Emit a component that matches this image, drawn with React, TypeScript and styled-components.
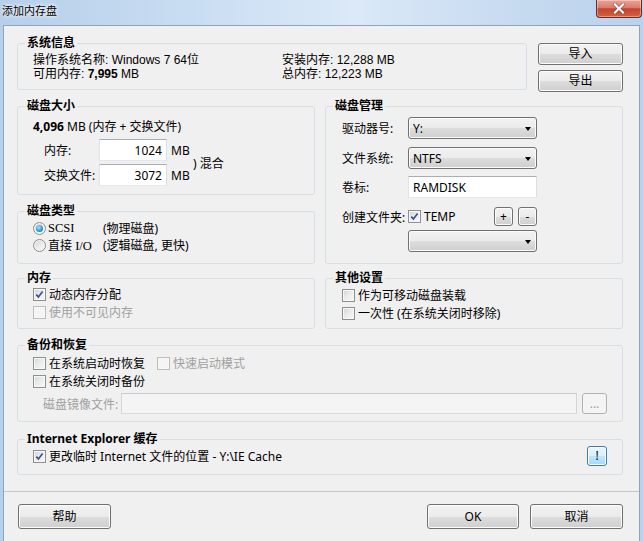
import * as React from 'react';
import styled, { createGlobalStyle } from 'styled-components';

const FONT = '"Noto Sans", "Noto Sans CJK SC", sans-serif';

const GlobalStyle = createGlobalStyle`
  * { box-sizing: border-box; }
  html, body { margin: 0; padding: 0; }
  body {
    background: #c4d9f0;
    font-family: ${FONT};
    font-size: 12px;
    color: #000;
  }
`;

const Window = styled.div`
  width: 643px;
  height: 541px;
  overflow: hidden;
  display: flex;
  flex-direction: column;
  padding: 0 3px;
  background: linear-gradient(90deg, #b7cfea 0%, #c9ddf2 30%, #dbe9f8 55%, #c8dbf0 78%, #bad2ec 100%);
`;

const TitleBar = styled.div`
  height: 25px;
  flex: none;
  display: flex;
  align-items: flex-start;
  justify-content: space-between;
  margin: 0 -3px;
  padding-left: 2px;
`;

const Title = styled.div`
  font-size: 11px;
  line-height: 22px;
  text-shadow: 0 0 5px #fff, 0 0 3px #fff;
`;

const CloseButton = styled.div`
  width: 46px;
  height: 18px;
  margin-right: 1px;
  display: flex;
  align-items: center;
  justify-content: center;
  border: 1px solid #6b2b26;
  border-top: none;
  border-radius: 0 0 4px 4px;
  background: linear-gradient(#e9a596 0%, #dc7a6c 45%, #c5412f 52%, #d0643f 100%);
  box-shadow: inset 0 0 0 1px rgba(255, 255, 255, 0.35);
`;

const Client = styled.div`
  flex: 1;
  display: flex;
  flex-direction: column;
  background: #f0f0f0;
  border: 1px solid #8fa3bd;
  border-bottom: none;
`;

const Body = styled.div`
  display: flex;
  flex-direction: column;
  padding: 10px 16px 0 13px;
`;

const TopRow = styled.div`
  display: flex;
  align-items: flex-start;
  gap: 11px;
`;

const ButtonColumn = styled.div`
  width: 85px;
  flex: none;
  display: flex;
  flex-direction: column;
  gap: 5px;
  padding-top: 7px;
`;

const Columns = styled.div`
  display: grid;
  grid-template-columns: 298px 298px;
  column-gap: 10px;
  row-gap: 7px;
  margin-top: 7px;
`;

const Stack = styled.div`
  display: flex;
  flex-direction: column;
`;

const Group = styled.fieldset<{ $mt?: number }>`
  margin: ${p => p.$mt ?? 0}px 0 0;
  padding: 0;
  min-width: 0;
  flex: 1;
  border: 1px solid #d5dfe5;
  border-radius: 3px;
`;

const Legend = styled.legend`
  margin-left: 7px;
  padding: 0 2px;
  font-weight: bold;
  font-size: 12px;
  line-height: 14px;
`;

const GroupBody = styled.div<{ $pad: string }>`
  padding: ${p => p.$pad};
`;

const InfoGrid = styled.div`
  display: grid;
  grid-template-columns: 249px auto;
  font-family: "Liberation Sans", "Noto Sans CJK SC", sans-serif;
  line-height: 14px;
  white-space: nowrap;
`;

const Line = styled.div`
  line-height: 14px;
  white-space: nowrap;
`;

const SizeGrid = styled.div`
  display: grid;
  grid-template-columns: 55px 68px 23px auto;
  grid-template-rows: 22px 22px;
  row-gap: 3px;
  margin: 5px 0 0 11px;
  align-items: center;
`;

const Unit = styled.span`
  padding-left: 4px;
`;

const Mixed = styled.span`
  grid-column: 4;
  grid-row: 1 / 3;
  padding-left: 3px;
  white-space: nowrap;
`;

const TextBox = styled.div<{ $align?: 'left' | 'right'; $disabled?: boolean }>`
  height: 100%;
  display: flex;
  align-items: center;
  justify-content: ${p => (p.$align === 'right' ? 'flex-end' : 'flex-start')};
  padding: 0 4px;
  background: ${p => (p.$disabled ? '#f4f4f4' : '#fff')};
  border: 1px solid ${p => (p.$disabled ? '#c9cccf' : '#abadb3')};
  border-bottom-color: ${p => (p.$disabled ? '#d8dbde' : '#e3e9ef')};
  border-left-color: ${p => (p.$disabled ? '#d2d5d8' : '#e2e3ea')};
  border-right-color: ${p => (p.$disabled ? '#d2d5d8' : '#dbdfe6')};
`;

const Latin = styled.span`
  font-family: "Liberation Serif", serif;
  font-size: 12.5px;
`;

const RadioRow = styled.div`
  display: grid;
  grid-template-columns: 15px 55px auto;
  align-items: center;
  height: 17px;
  white-space: nowrap;
`;

const Radio = styled.span<{ $checked?: boolean }>`
  width: 13px;
  height: 13px;
  border-radius: 50%;
  border: 1px solid #8e8f8f;
  display: flex;
  align-items: center;
  justify-content: center;
  background: linear-gradient(135deg, #d0d3d8 0%, #eeeeee 60%, #fbfbfb 100%);
  box-shadow: inset 0 0 0 1px #f6f6f6;

  &::after {
    content: '';
    display: ${p => (p.$checked ? 'block' : 'none')};
    width: 7px;
    height: 7px;
    border-radius: 50%;
    background: radial-gradient(circle at 40% 35%, #a8e4ff 0%, #3ea0dc 50%, #175c98 100%);
  }
`;

const CheckRow = styled.div<{ $h?: number; $gap?: number }>`
  display: flex;
  align-items: center;
  height: ${p => p.$h ?? 18}px;
  gap: ${p => p.$gap ?? 0}px;
  white-space: nowrap;
`;

const CheckItem = styled.label<{ $disabled?: boolean }>`
  display: inline-flex;
  align-items: center;
  gap: 3px;
  color: ${p => (p.$disabled ? '#a0a0a0' : '#000')};
`;

const Box = styled.span<{ $disabled?: boolean }>`
  width: 13px;
  height: 13px;
  flex: none;
  display: flex;
  align-items: center;
  justify-content: center;
  border: 1px solid ${p => (p.$disabled ? '#bcbcbc' : '#8e8f8f')};
  background: ${p =>
    p.$disabled
      ? '#f4f4f4'
      : 'linear-gradient(135deg, #cfd2d7 0%, #e9eaec 45%, #f8f8f8 100%)'};
  box-shadow: inset 0 0 0 1px #f7f7f7;
`;

const FormRow = styled.div<{ $mt?: number; $h?: number }>`
  display: grid;
  grid-template-columns: 66px 129px;
  align-items: center;
  height: ${p => p.$h ?? 22}px;
  margin-top: ${p => p.$mt ?? 0}px;
  white-space: nowrap;
`;

const Controls = styled.div`
  display: flex;
  align-items: center;
  height: 100%;
`;

const SmallButtons = styled.div`
  display: flex;
  gap: 5px;
  margin-left: auto;
`;

const Combo = styled.div`
  height: 100%;
  display: flex;
  align-items: center;
  justify-content: space-between;
  padding: 0 5px 0 4px;
  border: 1px solid #707070;
  border-radius: 3px;
  background: linear-gradient(#f2f2f2 0%, #ebebeb 50%, #dddddd 51%, #cfcfcf 100%);
  box-shadow: inset 0 0 0 1px #fbfbfb;
`;

const Arrow = styled.span`
  width: 0;
  height: 0;
  border-left: 3.5px solid transparent;
  border-right: 3.5px solid transparent;
  border-top: 4px solid #000;
  margin-top: 1px;
`;

const Button = styled.button<{ $w: number; $h: number; $disabled?: boolean; $hot?: boolean }>`
  width: ${p => p.$w}px;
  height: ${p => p.$h}px;
  flex: none;
  padding: 0;
  font-family: ${FONT};
  font-size: 12px;
  line-height: 1;
  color: ${p => (p.$disabled ? '#a0a0a0' : '#000')};
  border: 1px solid ${p => (p.$disabled ? '#adb2b5' : p.$hot ? '#3c7fb1' : '#707070')};
  border-radius: 3px;
  background: ${p =>
    p.$disabled
      ? '#f4f4f4'
      : p.$hot
      ? 'linear-gradient(#eaf6fd 0%, #d9f0fc 50%, #bee6fd 51%, #a7d9f5 100%)'
      : 'linear-gradient(#f2f2f2 0%, #ebebeb 50%, #dddddd 51%, #cfcfcf 100%)'};
  box-shadow: inset 0 0 0 1px ${p => (p.$disabled ? '#f4f4f4' : '#fcfcfc')};
  display: flex;
  align-items: center;
  justify-content: center;
`;

const FileRow = styled.div`
  display: flex;
  align-items: center;
  gap: 5px;
  height: 21px;
  margin-top: 3px;
`;

const FileLabel = styled.span`
  width: 83px;
  flex: none;
  padding-left: 10px;
  color: #a0a0a0;
  white-space: nowrap;
`;

const FileInput = styled(TextBox)`
  flex: 1;
`;

const IeRow = styled.div`
  display: flex;
  align-items: center;
  justify-content: space-between;
  height: 20px;
`;

const Footer = styled.div`
  display: flex;
  align-items: center;
  margin-top: 16px;
  padding: 12px 16px 0 14px;
  border-top: 1px solid #c6c6c6;
`;

const FooterRight = styled.div`
  display: flex;
  gap: 11px;
  margin-left: auto;
`;

function Check({ checked, disabled }: { checked?: boolean; disabled?: boolean }) {
  return (
    <Box $disabled={disabled}>
      {checked && (
        <svg width="9" height="9" viewBox="0 0 9 9">
          <path d="M1.3 4.6 L3.4 6.9 L7.6 1.4" fill="none" stroke="#35528c" strokeWidth="1.6" />
        </svg>
      )}
    </Box>
  );
}

function CheckOption(props: { label: React.ReactNode; checked?: boolean; disabled?: boolean }) {
  return (
    <CheckItem $disabled={props.disabled}>
      <Check checked={props.checked} disabled={props.disabled} />
      <span>{props.label}</span>
    </CheckItem>
  );
}

export default function App() {
  return (
    <>
      <GlobalStyle />
      <Window>
        <TitleBar>
          <Title>添加内存盘</Title>
          <CloseButton>
            <svg width="12" height="11" viewBox="0 0 12 11">
              <path d="M2 1.5 L10 9.5 M10 1.5 L2 9.5" stroke="#5a1a14" strokeWidth="3.4" strokeLinecap="square" opacity="0.5" />
              <path d="M2 1.5 L10 9.5 M10 1.5 L2 9.5" stroke="#fff" strokeWidth="2.2" strokeLinecap="square" />
            </svg>
          </CloseButton>
        </TitleBar>
        <Client>
          <Body>
            <TopRow>
              <Group>
                <Legend>系统信息</Legend>
                <GroupBody $pad="3px 0 8px 15px">
                  <InfoGrid>
                    <span>操作系统名称: Windows 7 64位</span>
                    <span>安装内存: 12,288 MB</span>
                    <span>可用内存: <b>7,995</b> MB</span>
                    <span>总内存: 12,223 MB</span>
                  </InfoGrid>
                </GroupBody>
              </Group>
              <ButtonColumn>
                <Button $w={85} $h={22}>导入</Button>
                <Button $w={85} $h={22}>导出</Button>
              </ButtonColumn>
            </TopRow>

            <Columns>
              <Stack>
                <Group>
                  <Legend>磁盘大小</Legend>
                  <GroupBody $pad="7px 0 8px 15px">
                    <Line><b>4,096</b> MB (内存 + 交换文件)</Line>
                    <SizeGrid>
                      <span>内存:</span>
                      <TextBox $align="right">1024</TextBox>
                      <Unit>MB</Unit>
                      <Mixed>) 混合</Mixed>
                      <span>交换文件:</span>
                      <TextBox $align="right">3072</TextBox>
                      <Unit>MB</Unit>
                    </SizeGrid>
                  </GroupBody>
                </Group>
                <Group $mt={9}>
                  <Legend>磁盘类型</Legend>
                  <GroupBody $pad="1px 0 5px 15px">
                    <RadioRow>
                      <Radio $checked />
                      <Latin>SCSI</Latin>
                      <span>(物理磁盘)</span>
                    </RadioRow>
                    <RadioRow>
                      <Radio />
                      <span>直接 <Latin>I/O</Latin></span>
                      <span>(逻辑磁盘, 更快)</span>
                    </RadioRow>
                  </GroupBody>
                </Group>
              </Stack>

              <Stack>
                <Group>
                  <Legend>磁盘管理</Legend>
                  <GroupBody $pad="4px 0 11px 16px">
                    <FormRow>
                      <span>驱动器号:</span>
                      <Combo>Y:<Arrow /></Combo>
                    </FormRow>
                    <FormRow $mt={8}>
                      <span>文件系统:</span>
                      <Combo>NTFS<Arrow /></Combo>
                    </FormRow>
                    <FormRow $mt={7}>
                      <span>卷标:</span>
                      <TextBox>RAMDISK</TextBox>
                    </FormRow>
                    <FormRow $mt={9} $h={19}>
                      <span>创建文件夹:</span>
                      <Controls>
                        <CheckOption label="TEMP" checked />
                        <SmallButtons>
                          <Button $w={19} $h={19}>+</Button>
                          <Button $w={19} $h={19}>-</Button>
                        </SmallButtons>
                      </Controls>
                    </FormRow>
                    <FormRow $mt={4}>
                      <span />
                      <Combo>&nbsp;<Arrow /></Combo>
                    </FormRow>
                  </GroupBody>
                </Group>
              </Stack>

              <Group>
                <Legend>内存</Legend>
                <GroupBody $pad="0 0 7px 15px">
                  <CheckRow>
                    <CheckOption label="动态内存分配" checked />
                  </CheckRow>
                  <CheckRow>
                    <CheckOption label="使用不可见内存" disabled />
                  </CheckRow>
                </GroupBody>
              </Group>

              <Group>
                <Legend>其他设置</Legend>
                <GroupBody $pad="1px 0 6px 16px">
                  <CheckRow>
                    <CheckOption label="作为可移动磁盘装载" />
                  </CheckRow>
                  <CheckRow>
                    <CheckOption label="一次性 (在系统关闭时移除)" />
                  </CheckRow>
                </GroupBody>
              </Group>
            </Columns>

            <Group $mt={9}>
              <Legend>备份和恢复</Legend>
              <GroupBody $pad="2px 15px 7px 15px">
                <CheckRow $gap={12}>
                  <CheckOption label="在系统启动时恢复" />
                  <CheckOption label="快速启动模式" disabled />
                </CheckRow>
                <CheckRow>
                  <CheckOption label="在系统关闭时备份" />
                </CheckRow>
                <FileRow>
                  <FileLabel>磁盘镜像文件:</FileLabel>
                  <FileInput $disabled />
                  <Button $w={25} $h={21} $disabled>...</Button>
                </FileRow>
              </GroupBody>
            </Group>

            <Group $mt={10}>
              <Legend>Internet Explorer 缓存</Legend>
              <GroupBody $pad="0 15px 8px 15px">
                <IeRow>
                  <CheckOption label="更改临时 Internet 文件的位置 - Y:\IE Cache" checked />
                  <Button $w={20} $h={20} $hot>!</Button>
                </IeRow>
              </GroupBody>
            </Group>
          </Body>

          <Footer>
            <Button $w={93} $h={25}>帮助</Button>
            <FooterRight>
              <Button $w={92} $h={25}>OK</Button>
              <Button $w={93} $h={25}>取消</Button>
            </FooterRight>
          </Footer>
        </Client>
      </Window>
    </>
  );
}
